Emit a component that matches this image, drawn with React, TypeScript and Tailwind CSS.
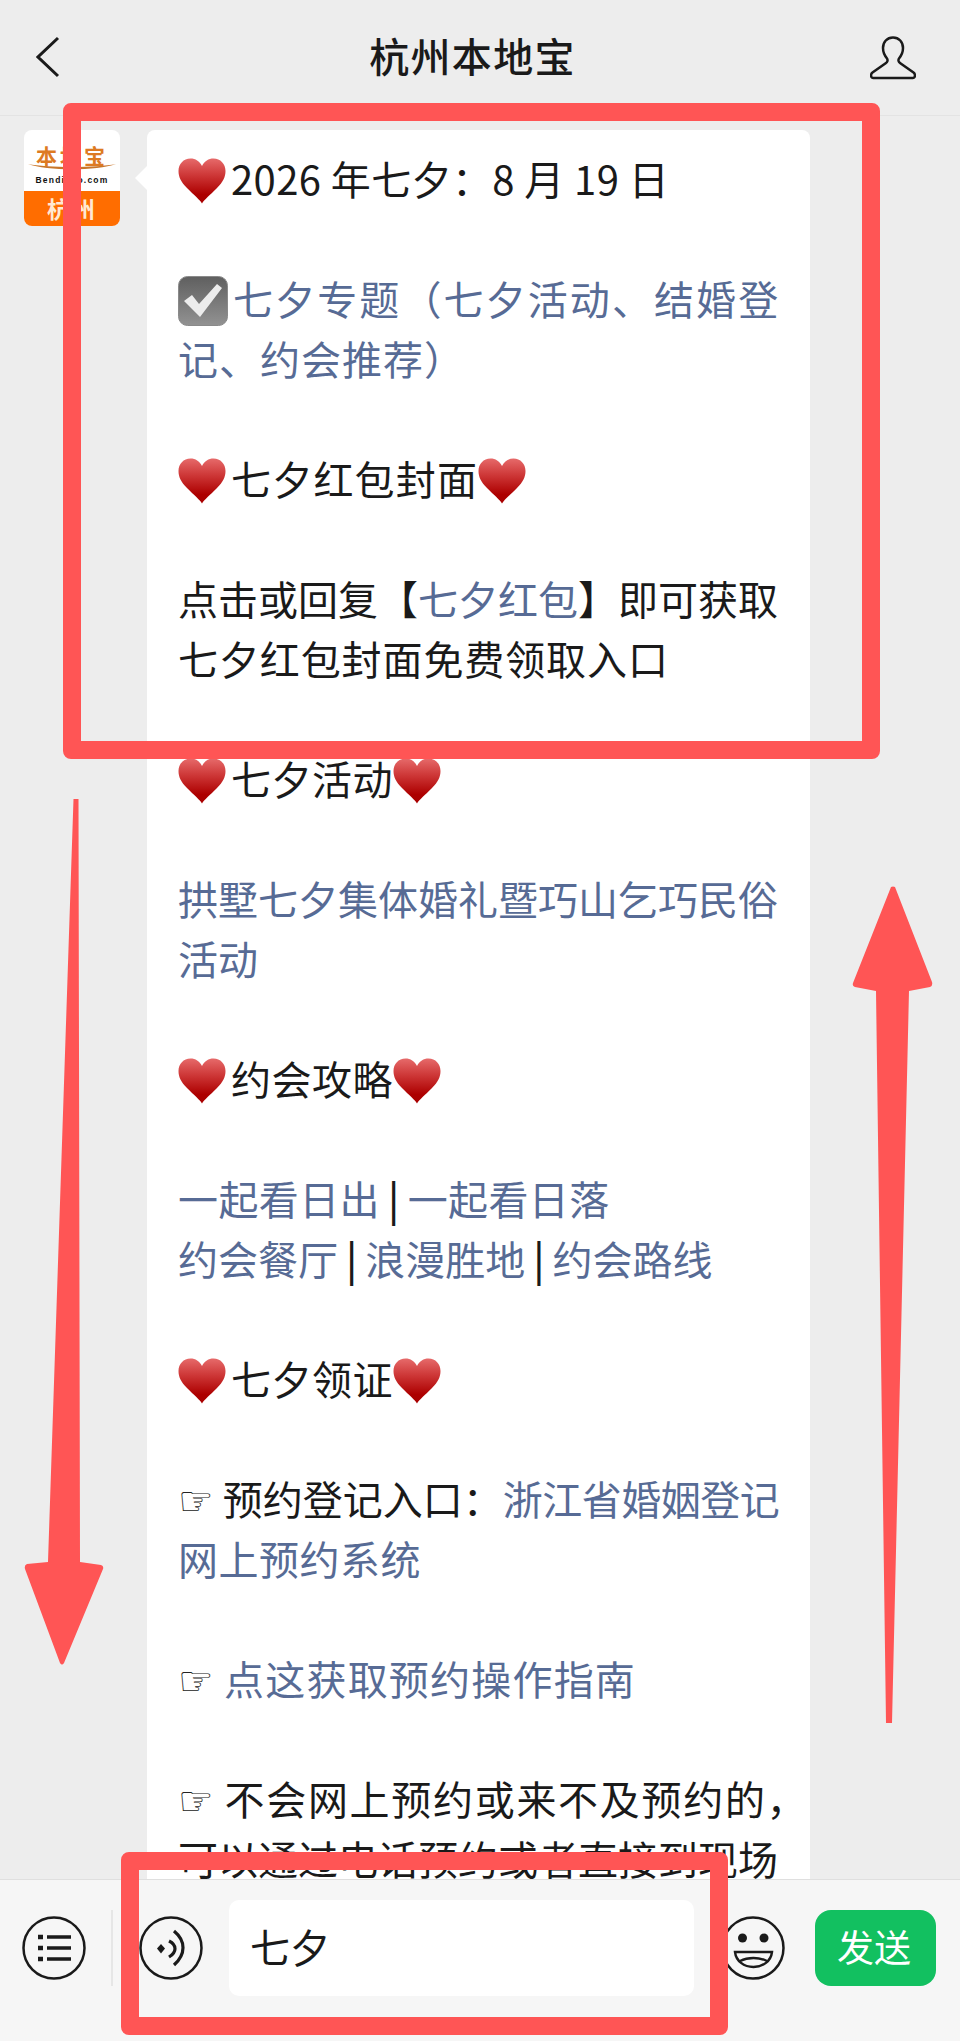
const Heart = () => (
  <svg viewBox="0 0 48 46" className="inline-block w-[48px] h-[46px] align-[-9px] mr-[5px]">
    <defs>
      <linearGradient id="hg" x1="0" y1="0" x2="0" y2="1">
        <stop offset="0" stopColor="#e66a6a" />
        <stop offset="0.35" stopColor="#cf3a3a" />
        <stop offset="0.8" stopColor="#ad0000" />
        <stop offset="1" stopColor="#a80000" />
      </linearGradient>
    </defs>
    <path d="M24 45.5 C22 42 16 37 9 30 C3 24 0.5 19 0.5 13 C0.5 6 5.5 0.5 12.5 0.5 C17.5 0.5 21.5 3 24 8 C26.5 3 30.5 0.5 35.5 0.5 C42.5 0.5 47.5 6 47.5 13 C47.5 19 45 24 39 30 C32 37 26 42 24 45.5 Z" fill="url(#hg)" />
  </svg>
);

const Check = () => (
  <svg viewBox="0 0 50 50" className="inline-block w-[50px] h-[50px] align-[-11px] mr-[5px]">
    <defs>
      <linearGradient id="cg" x1="0" y1="0" x2="0" y2="1">
        <stop offset="0" stopColor="#5f5f5f" />
        <stop offset="1" stopColor="#929292" />
      </linearGradient>
    </defs>
    <rect x="0.5" y="0.5" width="49" height="49" rx="9" fill="url(#cg)" stroke="#8a8a8a" />
    <path d="M6 25 L14 19 L21 28 L39 8 L44 12 L22 41 Z" fill="#ececec" />
  </svg>
);

const Hand = () => (
  <span className="font-['DejaVu_Sans'] text-[#222222] text-[40px] leading-none tracking-normal">☞</span>
);

const Link = ({ children }: { children: React.ReactNode }) => (
  <span className="text-[#576b95]">{children}</span>
);

const Bar = () => <span className="px-[8px] font-medium">|</span>;

const Gap = () => <div className="h-[60px]" />;

export default function App() {
  return (
    <div className="relative w-[960px] h-[2041px] overflow-hidden flex flex-col bg-[#ededed] text-[#1a1a1a] font-['Noto_Sans_CJK_SC',sans-serif]">
      <header className="h-[116px] shrink-0 flex items-start justify-between border-b border-[#e3e3e3] pl-[36px] pr-[44px] pt-[36px]">
        <svg viewBox="0 0 24 42" className="w-[24px] h-[42px]" fill="none" stroke="#1a1a1a" strokeWidth="3">
          <polyline points="22,2 2,21 22,40" />
        </svg>
        <h1 className="text-[40px] leading-[38px] font-medium tracking-[1.3px] ml-[15px]">杭州本地宝</h1>
        <svg viewBox="0 0 46 44" className="w-[46px] h-[44px]" fill="none" stroke="#1a1a1a" strokeWidth="2.5">
          <path d="M23 1.5 C17 1.5 13 6 13 12 C13 17 15 20 17 22.5 C18 24 17.5 26 16 27 L2.5 36.5 C0.5 38 0.5 42 3 42 L43 42 C45.5 42 45.5 38 43.5 36.5 L30 27 C28.5 26 28 24 29 22.5 C31 20 33 17 33 12 C33 6 29 1.5 23 1.5 Z" />
        </svg>
      </header>

      <main className="flex-1 min-h-0 overflow-hidden flex items-start gap-[27px] pl-[24px] pt-[14px]">
        <div className="w-[96px] h-[96px] shrink-0 rounded-[8px] overflow-hidden flex flex-col bg-white">
          <div className="h-[61px] flex flex-col items-center pt-[14px] relative">
            <div className="text-[#dd7a22] text-[21px] leading-[22px] font-bold tracking-[3px]">本地宝</div>
            <svg viewBox="0 0 90 10" className="absolute left-[3px] top-[33px] w-[90px] h-[10px]">
              <path d="M1 1 C20 8 70 8 89 1 C70 5 20 5 1 1 Z" fill="#c8762a" />
            </svg>
            <div className="text-[8.5px] leading-[10px] font-bold text-[#111111] tracking-[1.2px] mt-[9px] font-['Liberation_Sans',sans-serif]">Bendibao.com</div>
          </div>
          <div className="flex-1 bg-[#ff6d00] text-[#ffe9d2] text-[23px] leading-[35px] font-bold text-center tracking-[2px]">杭州</div>
        </div>

        <div className="relative w-[663px] shrink-0 bg-white rounded-t-[8px] pl-[31px] pt-[18px] text-[40px] leading-[60px] whitespace-nowrap">
          <svg viewBox="0 0 13 26" className="absolute left-[-12px] top-[35px] w-[13px] h-[26px]">
            <path d="M13 0 L0 13 L13 26 Z" fill="#ffffff" />
          </svg>
          <p className="tracking-[0.4px]"><Heart />2026 年七夕：8 月 19 日</p>
          <Gap />
          <p className="tracking-[2.1px]"><Check /><Link>七夕专题（七夕活动、结婚登</Link></p>
          <p className="tracking-[1px]"><Link>记、约会推荐）</Link></p>
          <Gap />
          <p className="tracking-[1.2px]"><Heart />七夕红包封面<Heart /></p>
          <Gap />
          <p>点击或回复【<Link>七夕红包</Link>】即可获取</p>
          <p className="tracking-[0.9px]">七夕红包封面免费领取入口</p>
          <Gap />
          <p className="tracking-[0.5px]"><Heart />七夕活动<Heart /></p>
          <Gap />
          <p><Link>拱墅七夕集体婚礼暨巧山乞巧民俗</Link></p>
          <p><Link>活动</Link></p>
          <Gap />
          <p className="tracking-[0.5px]"><Heart />约会攻略<Heart /></p>
          <Gap />
          <p className="tracking-[0.4px]"><Link>一起看日出</Link><Bar /><Link>一起看日落</Link></p>
          <p><Link>约会餐厅</Link><Bar /><Link>浪漫胜地</Link><Bar /><Link>约会路线</Link></p>
          <Gap />
          <p className="tracking-[0.5px]"><Heart />七夕领证<Heart /></p>
          <Gap />
          <p><Hand /> 预约登记入口：<span className="text-[#576b95] tracking-[-0.5px]">浙江省婚姻登记</span></p>
          <p className="tracking-[0.5px]"><Link>网上预约系统</Link></p>
          <Gap />
          <p className="tracking-[1.2px]"><Hand /> <Link>点这获取预约操作指南</Link></p>
          <Gap />
          <p className="tracking-[1.7px]"><Hand /> 不会网上预约或来不及预约的，</p>
          <p>可以通过电话预约或者直接到现场</p>
        </div>
      </main>

      <footer className="h-[162px] shrink-0 bg-[#f6f6f6] border-t border-[#dfdfdf] pt-[20px]">
        <div className="h-[96px] flex items-center pl-[22px]">
          <svg viewBox="0 0 64 64" className="w-[64px] h-[64px]" fill="none" stroke="#1a1a1a" strokeWidth="2.5">
            <circle cx="32" cy="32" r="30.5" />
            <path d="M16 21 h5 M16 32 h5 M16 43 h5" strokeWidth="4.5" />
            <path d="M25 21 h24 M25 32 h24 M25 43 h24" strokeWidth="3.5" />
          </svg>
          <div className="w-[2px] h-[76px] bg-[#e6e6e6] ml-[25px] mr-[26px]" />
          <svg viewBox="0 0 64 64" className="w-[64px] h-[64px]" fill="none" stroke="#1a1a1a" strokeWidth="2.5">
            <circle cx="32" cy="32" r="30.5" />
            <path d="M18 32.5 L22 28 L26 32.5 L22 37.5 Z" fill="#1a1a1a" stroke="none" />
            <path d="M30 25 C38 29 38 36 30 41" strokeWidth="3.2" />
            <path d="M35 15 C47 25 47 38 35 49" strokeWidth="3.2" />
          </svg>
          <div className="w-[465px] h-[96px] bg-white rounded-[10px] ml-[26px] flex items-center pl-[21px] pb-[4px] text-[40px]">七夕</div>
          <svg viewBox="0 0 64 64" className="w-[64px] h-[64px] ml-[27px]" fill="none" stroke="#1a1a1a" strokeWidth="2.5">
            <circle cx="32" cy="32" r="30.5" />
            <circle cx="21.5" cy="22" r="4.5" fill="#1a1a1a" stroke="none" />
            <circle cx="43" cy="22" r="4.5" fill="#1a1a1a" stroke="none" />
            <path d="M14 36 H51 C50 45 42 51 32.5 51 C23 51 15 45 14 36 Z" strokeWidth="2.4" />
            <path d="M19 45 C27 41 38 41 46 45" strokeWidth="2.4" />
          </svg>
          <div className="w-[121px] h-[76px] rounded-[16px] bg-[#12c060] ml-[30px] flex items-center justify-center pb-[3px] pr-[3px] text-white text-[37px]">发送</div>
        </div>
      </footer>

      <div className="absolute left-[63px] top-[103px] w-[817px] h-[656px] border-[18px] border-[#ff5555] rounded-[8px]" />
      <div className="absolute left-[121px] top-[1852px] w-[607px] h-[183px] border-[18px] border-[#ff5555] rounded-[8px]" />

      <svg viewBox="0 0 90 870" className="absolute left-[20px] top-[797px] w-[90px] h-[870px]">
        <path d="M53.5 2 L58.5 2 L60 765 L81 768 Q84 769 83 772 L44 866 Q42 869 40 866 L5 772 Q4 768 7 767 L28 765 Z" fill="#ff5555" />
      </svg>
      <svg viewBox="0 0 90 840" className="absolute left-[849px] top-[885px] w-[90px] h-[840px]">
        <path d="M42 2 Q44 1 46 2 L83 97 Q84 101 81 102 L60 106 L43 838 L37 838 L27 106 L6 102 Q3 101 4 98 Z" fill="#ff5555" />
      </svg>
    </div>
  );
}
